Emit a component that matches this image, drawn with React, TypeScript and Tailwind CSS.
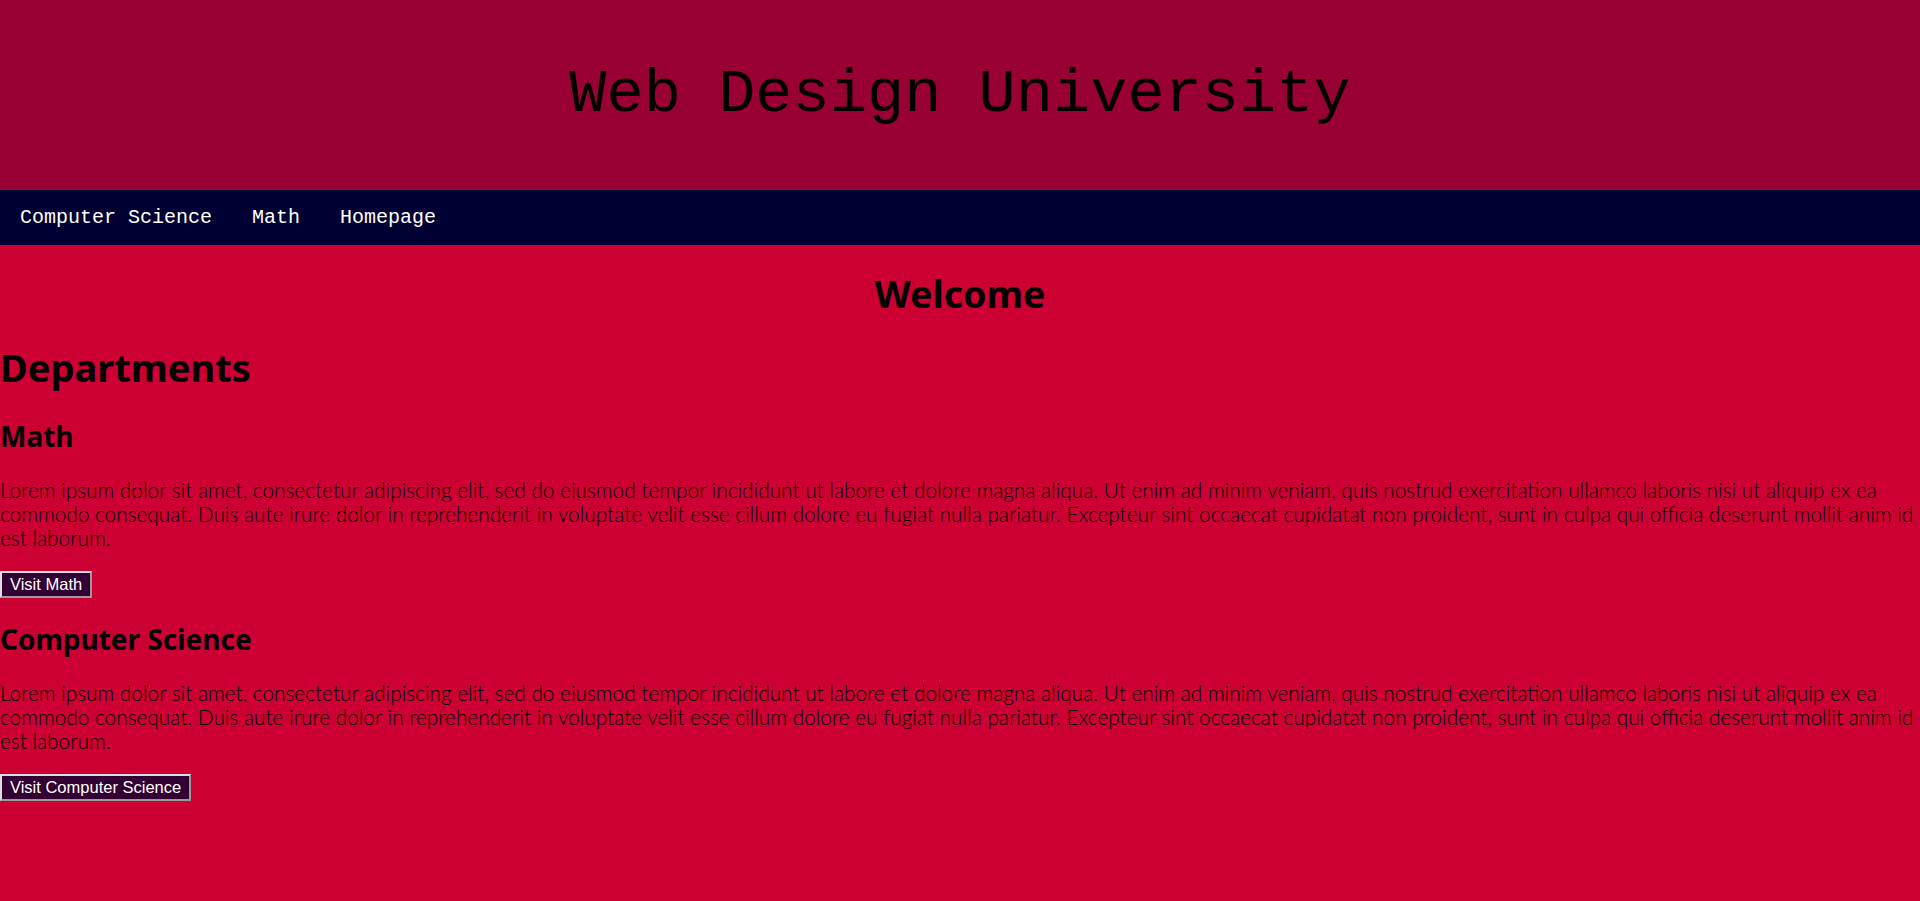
const lorem =
  "Lorem ipsum dolor sit amet, consectetur adipiscing elit, sed do eiusmod tempor incididunt ut labore et dolore magna aliqua. Ut enim ad minim veniam, quis nostrud exercitation ullamco laboris nisi ut aliquip ex ea commodo consequat. Duis aute irure dolor in reprehenderit in voluptate velit esse cillum dolore eu fugiat nulla pariatur. Excepteur sint occaecat cupidatat non proident, sunt in culpa qui officia deserunt mollit anim id est laborum.";

const departments = [
  { name: "Math", button: "Visit Math" },
  { name: "Computer Science", button: "Visit Computer Science" },
];

function Department({ name, button }: { name: string; button: string }) {
  return (
    <section>
      <h3 className="font-['Noto_Sans',sans-serif] font-bold text-[28px] leading-[28px] text-black">
        {name}
      </h3>
      <p className="mt-[28px] font-['Lato',sans-serif] font-light text-[20.8px] leading-[24px] text-black">
        {lorem}
      </p>
      <button className="mt-[21px] block h-[27px] px-[8px] bg-[#330033] text-white font-['Liberation_Sans',Arial,sans-serif] text-[16.5px] leading-none border-2 border-t-[#dedede] border-l-[#dedede] border-r-[#9a9a9a] border-b-[#9a9a9a]">
        {button}
      </button>
    </section>
  );
}

export default function App() {
  return (
    <div className="min-h-screen bg-[#cc0033]">
      <header className="h-[190px] bg-[#990033] flex items-center justify-center">
        <h1 className="font-['Liberation_Mono',monospace] text-[62px] leading-none text-black">
          Web Design University
        </h1>
      </header>

      <nav className="h-[55px] bg-[#000033] flex items-center">
        {["Computer Science", "Math", "Homepage"].map((l) => (
          <a
            key={l}
            href="#"
            className="px-5 font-['Liberation_Mono',monospace] text-[20px] text-white"
          >
            {l}
          </a>
        ))}
      </nav>

      <main className="pb-[100px]">
        <h2 className="pt-[30px] text-center font-['Noto_Sans',sans-serif] font-bold text-[37.5px] leading-[38px] text-black">
          Welcome
        </h2>
        <h2 className="mt-[35px] font-['Noto_Sans',sans-serif] font-bold text-[38px] leading-[38px] text-black">
          Departments
        </h2>
        <div className="mt-[36px] flex flex-col gap-[27px]">
          {departments.map((d) => (
            <Department key={d.name} {...d} />
          ))}
        </div>
      </main>
    </div>
  );
}
